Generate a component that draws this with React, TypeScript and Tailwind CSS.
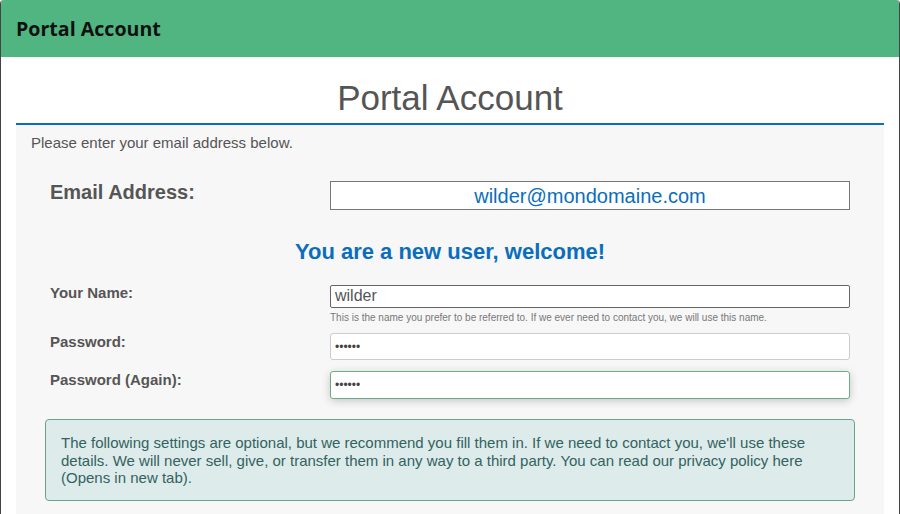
import React from 'react';

const sans = "font-['Liberation_Sans',Arial,sans-serif]";

const Row: React.FC<{ label: string; children: React.ReactNode; className?: string }> = ({ label, children, className }) => (
  <div className={`grid grid-cols-[280px_1fr] items-start px-[5px] ${className ?? ''}`}>
    <div className="text-[15px] leading-[18px] font-bold text-[#555]">{label}</div>
    <div>{children}</div>
  </div>
);

const App: React.FC = () => {
  return (
    <div className={`w-[900px] h-[514px] overflow-hidden bg-white border-x border-[#444] rounded-t-[4px] ${sans}`}>
      <div className="h-[57px] bg-[#50b580] flex items-center pl-[15px]">
        <span className="font-['Open_Sans',sans-serif] font-bold text-[19.6px] text-[#111]">Portal Account</span>
      </div>

      <div className="px-[15px]">
        <div className="border-b-2 border-[#0a6ebd] pt-[21px] pb-[5px]">
          <h1 className="text-center text-[35px] leading-[40px] text-[#555]">Portal Account</h1>
        </div>

        <div className="bg-[#f7f7f7] pt-[9px] pb-[20px] pl-[29px] pr-[29px]">
          <p className="-ml-[14px] text-[15px] leading-[18px] text-[#555]">Please enter your email address below.</p>

          <div className="grid grid-cols-[280px_1fr] items-start px-[5px] mt-[28px]">
            <div className="text-[20px] leading-[24px] font-bold text-[#555]">Email Address:</div>
            <input
              readOnly
              value="wilder@mondomaine.com"
              className="mt-[1px] h-[29px] w-full bg-white border border-[#777] text-center text-[20px] text-[#0a6ebd] outline-none"
            />
          </div>

          <h2 className="mt-[29px] text-center text-[22px] leading-[26px] font-bold text-[#0a6ebd]">You are a new user, welcome!</h2>

          <Row label="Your Name:" className="mt-[19px]">
            <input
              readOnly
              value="wilder"
              className="h-[23px] w-full bg-white border border-[#666] rounded-[2px] px-[4px] text-[16px] text-[#555] outline-none"
            />
            <p className="mt-[4px] text-[10px] leading-[12px] text-[#777]">
              This is the name you prefer to be referred to. If we ever need to contact you, we will use this name.
            </p>
          </Row>

          <Row label="Password:" className="mt-[9px]">
            <div className="h-[27px] w-full bg-white border border-[#ccc] rounded-[3px] px-[4px] flex items-center text-[12px] text-[#444]">
              ••••••
            </div>
          </Row>

          <Row label="Password (Again):" className="mt-[11px]">
            <div className="h-[28px] w-full bg-white border border-[#6dac8b] rounded-[3px] px-[4px] flex items-center text-[12px] text-[#444] shadow-[0_2px_8px_rgba(0,0,0,0.2)]">
              ••••••
            </div>
          </Row>

          <div className="mt-[20px] bg-[#ddeceb] border border-[#6aa386] rounded-[4px] pt-[14px] pb-[13px] px-[15px] text-[15px] leading-[17.5px] text-[#33625f]">
            The following settings are optional, but we recommend you fill them in. If we need to contact you, we'll use these details. We will never sell, give, or transfer them in any way to a third party. You can read our privacy policy here (Opens in new tab).
          </div>
        </div>
      </div>
    </div>
  );
};

export default App;
